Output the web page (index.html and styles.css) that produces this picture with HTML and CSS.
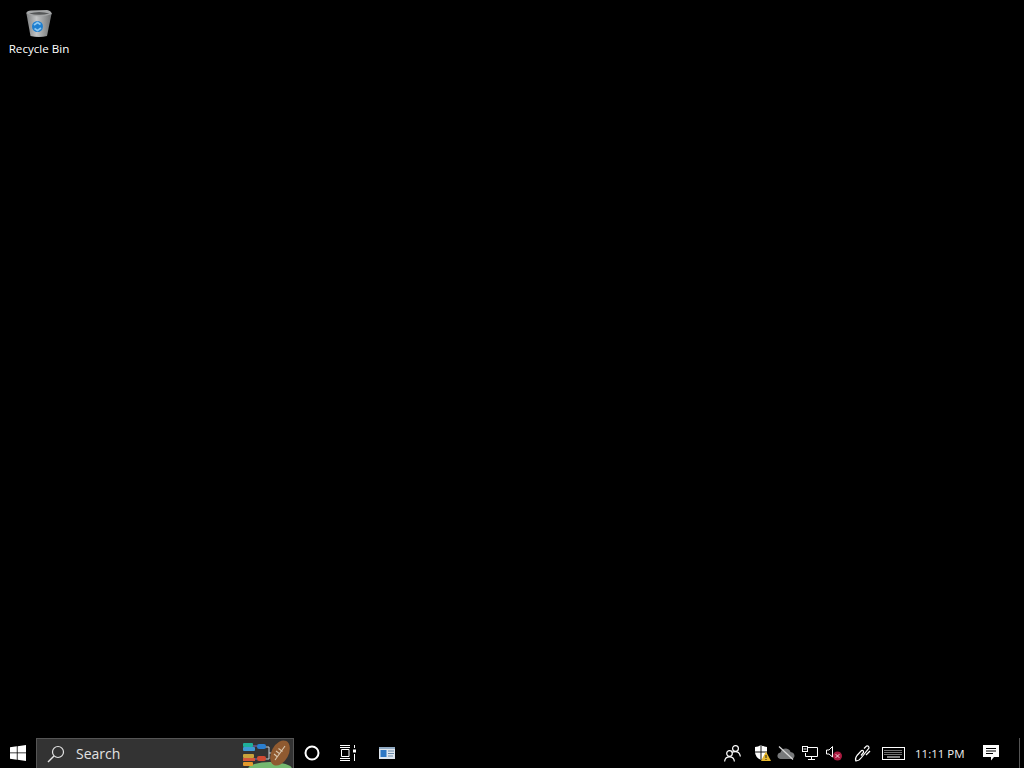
FILE: index.html
```html
<!DOCTYPE html>
<html lang="en">
<head>
<meta charset="utf-8">
<title>Desktop</title>
<link rel="stylesheet" href="styles.css">
</head>
<body>
<main class="desktop">
  <div class="desk-item">
    <svg class="bin" width="30" height="30" viewBox="0 0 30 30">
      <defs>
        <linearGradient id="binBody" x1="0" x2="1" y1="0" y2="0">
          <stop offset="0" stop-color="#7f8182"/><stop offset=".4" stop-color="#c2c4c5"/><stop offset="1" stop-color="#6f7172"/>
        </linearGradient>
      </defs>
      <path d="M2.500 6 L6.500 28 Q15 30 23 28 L27.500 6 Z" fill="url(#binBody)"/>
      <path d="M2 5.500 Q3 2.500 7 2.500 L23 2 Q27 2.500 28 6 Q15 11 2 5.500 Z" fill="#a4a6a7"/>
      <path d="M5 5.500 Q15 2.500 25.500 5.500 Q15 8 5 5.500 Z" fill="#555758"/>
      <circle cx="13.500" cy="18.500" r="5.500" fill="#1e7fd0"/>
      <path d="M10 17 L13.500 14.500 L16.500 16.500 M17 20 L13.500 22.500 L10.500 20.500" fill="none" stroke="#8cc8f2" stroke-width="1.600"/>
    </svg>
    <span class="desk-label">Recycle Bin</span>
  </div>
</main>
<footer class="taskbar">
  <div class="slot start">
    <svg width="16" height="16" viewBox="0 0 16 16"><path fill="#fff" d="M0 2.300 L6.800 1.300 V7.500 H0 Z M7.600 1.200 L16 0 V7.500 H7.600 Z M0 8.300 H6.800 V14.700 L0 13.700 Z M7.600 8.300 H16 V16 L7.600 14.800 Z"/></svg>
  </div>
  <div class="search">
    <svg class="search-icon" width="18" height="18" viewBox="0 0 18 18"><circle cx="11" cy="7" r="5.500" fill="none" stroke="#e4e4e4" stroke-width="1.200"/><path d="M7 11 L1 17" stroke="#e4e4e4" stroke-width="1.400"/></svg>
    <span class="search-text">Search</span>
    <svg class="search-art" width="54" height="29" viewBox="0 0 54 29">
      <ellipse cx="31" cy="30" rx="22" ry="7" fill="#74b86f"/>
      <path d="M26 8 H30 V14 H34 M26 20 H30 V14" stroke="#c8cfd4" stroke-width="1" fill="none"/>
      <path d="M13 7 H18 M13 20 H18" stroke="#8a6cc0" stroke-width="1"/>
      <rect x="4" y="4" width="10" height="4" rx="1" fill="#1fb09c"/>
      <rect x="4" y="8" width="12" height="4" rx="1" fill="#3f9ad6"/>
      <rect x="18" y="5" width="9" height="5" rx="2" fill="#2a7fd0"/>
      <rect x="4" y="15" width="11" height="4" rx="1" fill="#c9a23a"/>
      <rect x="4" y="19" width="12" height="3" fill="#d2553a"/>
      <rect x="4" y="23" width="10" height="4" rx="1" fill="#e39a2c"/>
      <rect x="18" y="17" width="9" height="5" rx="2" fill="#cf4a33"/>
      <ellipse cx="41" cy="14" rx="8.500" ry="13.500" transform="rotate(28 41 14)" fill="#8f5a30"/>
      <path d="M36 21 L46 7 M37 12 L41 15 M39.500 9.500 L43.500 12.500 M35 15 L38.500 18" stroke="#d9c7ae" stroke-width="1.100"/>
    </svg>
  </div>
  <div class="slot">
    <svg width="16" height="16" viewBox="0 0 16 16"><circle cx="8" cy="8" r="6.500" fill="none" stroke="#fff" stroke-width="2"/></svg>
  </div>
  <div class="slot">
    <svg width="18" height="16" viewBox="0 0 18 16" fill="none" stroke="#fff" stroke-width="1"><path d="M1 .5 H11 M1 15.500 H11 M2.500 4.500 H10 V11.500 H2.500 Z M1 2.500 H11 M1 13.500 H11 M15.500 0 V3 M15.500 9 V16"/><rect x="14" y="4.500" width="3" height="3" fill="#fff" stroke="none"/></svg>
  </div>
  <div class="slot app">
    <svg width="16" height="12" viewBox="0 0 16 12"><rect width="16" height="12" fill="#dfe6ee"/><rect width="16" height="2" fill="#8fa9c2"/><rect x="1.500" y="3" width="6" height="7" fill="#2f78c4"/><path d="M9 4 H15 M9 6.500 H15 M9 9 H14" stroke="#6a8aa8" stroke-width="1"/></svg>
  </div>
  <div class="tray">
    <svg class="t-people" width="17" height="17" viewBox="0 0 17 17" fill="none" stroke="#fff" stroke-width="1.200"><circle cx="5.500" cy="8.500" r="2.800"/><path d="M.6 16.500 Q1 11.800 5.500 11.800 Q10 11.800 10.400 16.500"/><circle cx="11.500" cy="3.500" r="2.900"/><path d="M8 7.300 Q11.500 6 14.500 7.500 Q16 9 16.400 11.500"/></svg>
    <svg class="t-shield" width="16" height="16" viewBox="0 0 16 16"><path fill="#fff" d="M6 0 Q9 2 12 2 V7 Q12 12 6 15 Q0 12 0 7 V2 Q3 2 6 0 Z"/><path d="M6 0 V15 M0 7 H12" stroke="#111" stroke-width="1"/><path fill="#e9b92e" d="M11 6.500 L16 16 H6 Z"/><path d="M11 10 V13 M11 14 V15" stroke="#222" stroke-width="1"/></svg>
    <svg class="t-cloud" width="18" height="14" viewBox="0 0 18 14"><path fill="#77797a" d="M3.500 13 Q0 12.500 .5 9 Q1 6.500 3.500 6.500 Q4.500 2.500 9 2.500 Q13 3 13.500 6 Q17.500 6.500 17.500 10 Q17 13 14 13 Z"/><path d="M2 .5 L16 13.500" stroke="#d8d8d8" stroke-width="1.300"/></svg>
    <svg class="t-net" width="16" height="14" viewBox="0 0 16 14" fill="none" stroke="#fff" stroke-width="1"><path d="M5 1.500 H15.500 V10.500 H3.500 V7"/><path d="M9.500 10.500 V13.500 M6 13.500 H13"/><rect x=".5" y=".5" width="5" height="5" fill="#000"/><path d="M1.500 3 H4.500"/></svg>
    <svg class="t-sound" width="16" height="16" viewBox="0 0 16 16"><path fill="none" stroke="#fff" d="M.5 5 H3 L6.500 1.500 V12 L3 9 H.5 Z"/><circle cx="11.500" cy="11" r="4.500" fill="#a91a3f"/><path d="M9.700 9.200 L13.300 12.800 M13.300 9.200 L9.700 12.800" stroke="#f4dde3" stroke-width="1"/></svg>
    <svg class="t-pen" width="17" height="17" viewBox="0 0 17 17" fill="none" stroke="#fff" stroke-width="1.200"><path d="M10 3.500 L12.500 1 Q15 .5 15 3 L7.500 12.500 Q5 16 1.800 15.800 Q.8 13.500 3 10.500 L7.500 5.500 Q9.800 5 9.500 7.500 L7 10.500"/><path d="M12 10 L16 6"/></svg>
    <svg class="t-keys" width="23" height="13" viewBox="0 0 23 13"><rect x=".5" y=".5" width="22" height="12" fill="none" stroke="#fff"/><path d="M2.500 3.500 H20.500 M2.500 5.500 H20.500 M2.500 7.500 H20.500" stroke="#e4e4e4" stroke-width="1" stroke-dasharray="1 1"/><path d="M5 10 H18" stroke="#fff"/></svg>
    <span class="clock">11:11 PM</span>
    <svg class="t-action" width="16" height="16" viewBox="0 0 16 16"><path fill="#fff" d="M0 0 H16 V12 H11 L8 15.500 V12 H0 Z"/><path d="M3 3.500 H13 M3 6 H13 M3 8.500 H10" stroke="#000" stroke-width="1"/></svg>
    <span class="show-desktop"></span>
  </div>
</footer>
</body>
</html>
```
FILE: styles.css
```css
* { box-sizing: border-box; }
html, body { height: 100%; margin: 0; }
body {
  display: flex;
  flex-direction: column;
  height: 768px;
  overflow: hidden;
  background: #000;
  font-family: "Open Sans", "Noto Sans", sans-serif;
  color: #fff;
}
.desktop { flex: 1; padding: 8px 0 0 4px; }
.desk-item {
  display: flex;
  flex-direction: column;
  align-items: center;
  width: 70px;
}
.desk-label { font-size: 11.600px; line-height: 16px; margin-top: 3px; }
.taskbar { display: flex; height: 30px; background: #000; }
.slot {
  display: flex;
  align-items: center;
  justify-content: center;
  width: 36px;
  height: 30px;
  flex: none;
}
.app { margin-left: 3px; }
.search {
  display: flex;
  align-items: center;
  width: 258px;
  height: 30px;
  padding-left: 10px;
  background: #333;
  border: 1px solid #555;
  border-bottom: 0;
  flex: none;
}
.search-text { margin-left: 11px; font-size: 14px; color: #e2e2e2; }
.search-art { margin-left: auto; align-self: flex-end; }
.tray { display: flex; align-items: center; margin-left: auto; height: 30px; }
.t-people { margin-right: 14px; }
.t-shield { margin-right: 6px; }
.t-cloud { margin-right: 7px; }
.t-net { margin-right: 8px; }
.t-sound { margin-right: 12px; }
.t-pen { margin-right: 11px; }
.t-keys { margin-right: 10px; }
.clock { font-size: 11.500px; color: #eee; width: 68px; }
.t-action { margin-right: 20px; }
.show-desktop { width: 1px; height: 30px; background: #555; margin-right: 4px; }
```
